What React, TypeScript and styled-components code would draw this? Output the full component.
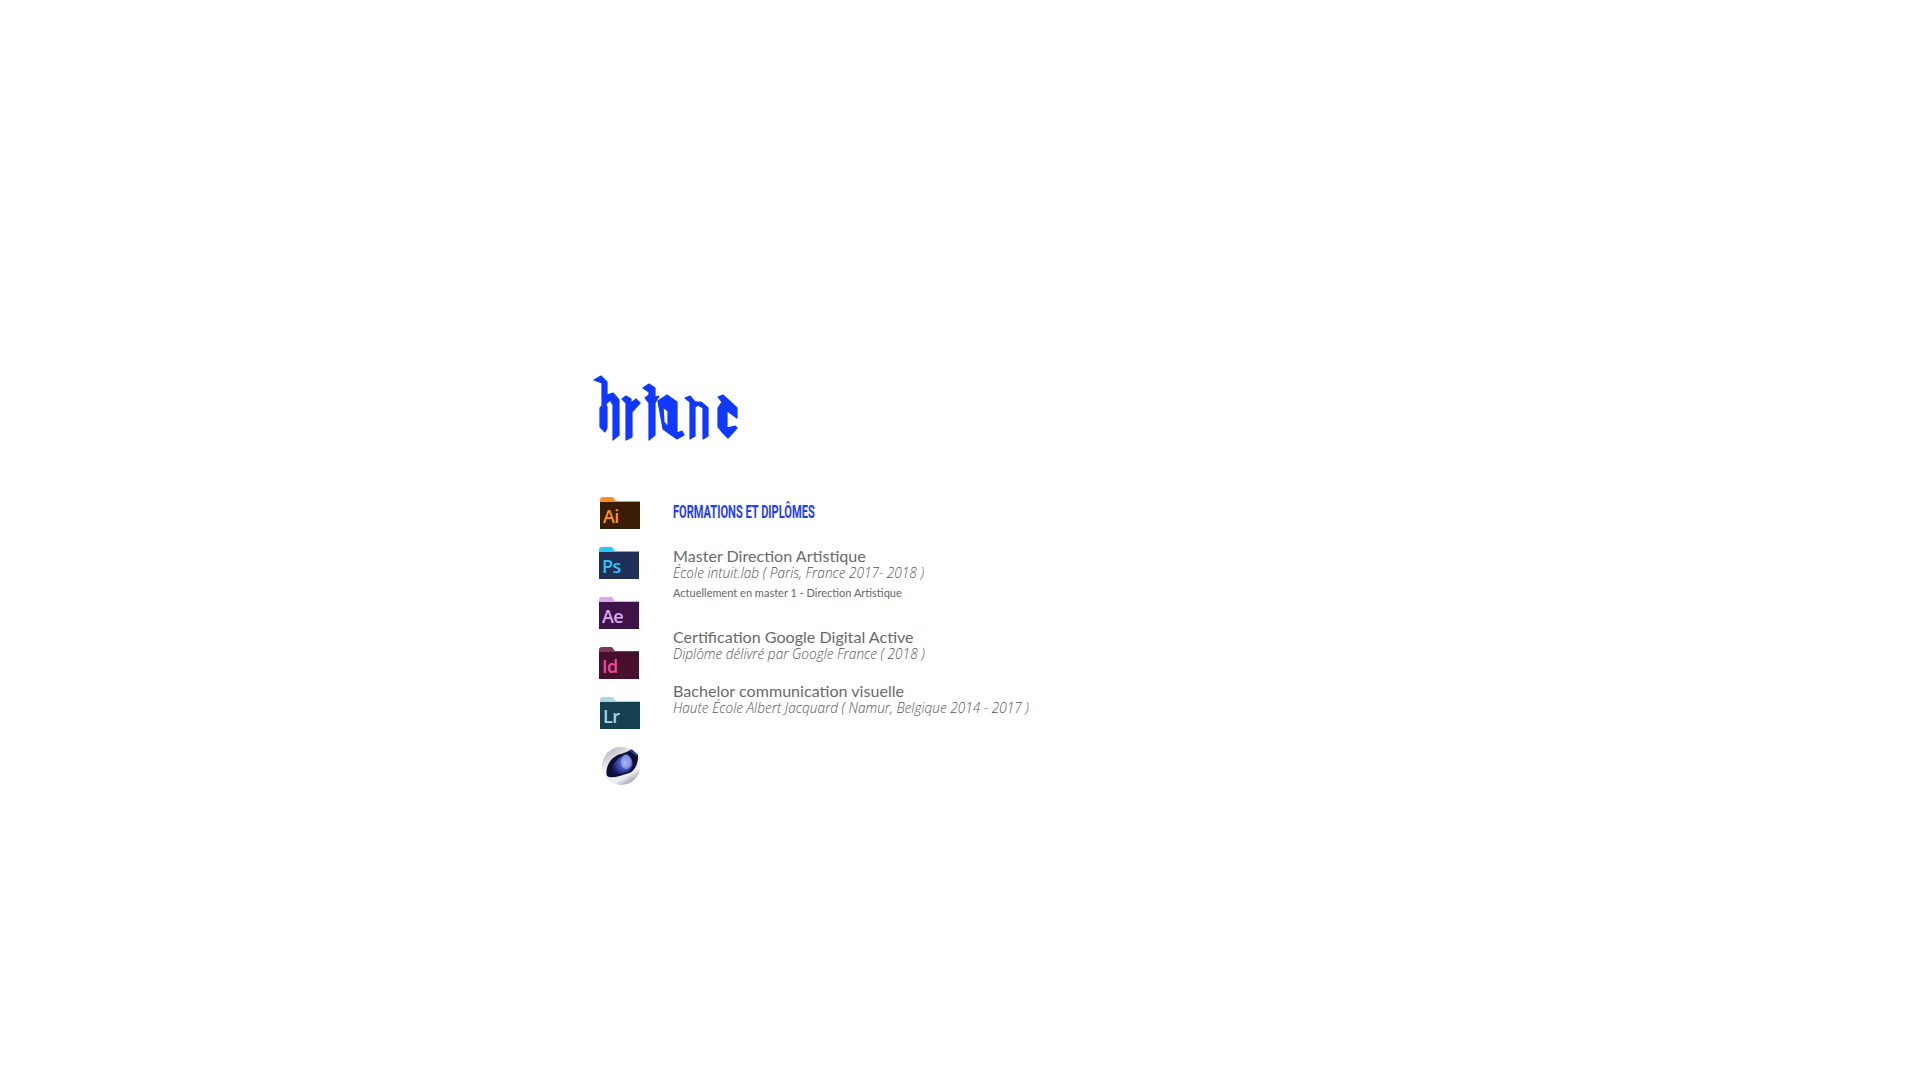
import React from "react";
import styled, {createGlobalStyle} from "styled-components";

const GlobalStyle = createGlobalStyle`
  html, body {
    margin: 0;
    background: #fff;
  }
`;

interface IFolder {
    label: string
    tab: string
    body: string
    text: string
    shift?: number
}

const folders: IFolder[] = [
    {label: "Ai", tab: "#f7931e", body: "#3a1c07", text: "#f7931e", shift: 1},
    {label: "Ps", tab: "#2fc6f5", body: "#1f2f57", text: "#31c5f4"},
    {label: "Ae", tab: "#d9a9ee", body: "#3f1349", text: "#d9a9ee"},
    {label: "Id", tab: "#7a3a52", body: "#46102c", text: "#f04a9d"},
    {label: "Lr", tab: "#a9d6e5", body: "#15404f", text: "#a9d6e5", shift: 1}
];

const FolderIcon = ({label, tab, body, text, shift}: IFolder) => (
    <FolderSvg viewBox="0 0 40 32" $shift={shift || 0}>
        <path d="M0 6 V3 Q0 0 3 0 H12 Q14 0 15 3 L16 4 H40 V6 Z" fill={tab}/>
        <rect x="0" y="5" width="40" height="27" fill={body}/>
        <rect x="15" y="4" width="25" height="1" fill={tab} opacity="0.8"/>
        <FolderLabel x="3" y="26" fill={text}>{label}</FolderLabel>
    </FolderSvg>
);

const CinemaIcon = () => (
    <CinemaSvg viewBox="0 0 40 40">
        <defs>
            <linearGradient id="ball" x1="0.1" y1="0" x2="0.7" y2="1">
                <stop offset="0" stopColor="#a8aab2"/>
                <stop offset="0.45" stopColor="#f6f6f8"/>
                <stop offset="0.8" stopColor="#eeeef2"/>
                <stop offset="1" stopColor="#9a9ca6"/>
            </linearGradient>
            <radialGradient id="bowl" cx="0.62" cy="0.45" r="0.65">
                <stop offset="0" stopColor="#a6b2ee"/>
                <stop offset="0.45" stopColor="#4453bd"/>
                <stop offset="1" stopColor="#12165a"/>
            </radialGradient>
        </defs>
        <circle cx="20" cy="20" r="20" fill="url(#ball)"/>
        <path d="M5 30 C3 20 10 9 21 7 C26 6 29 3 32 3 L38 9 C38 17 35 26 27 28 C19 31 8 34 5 30 Z" fill="#0d1033"/>
        <path d="M11 28 C9 19 16 10 27 7 C31 11 33 15 32 20 C30 25 25 28 20 28 C16 29 12 29 11 28 Z" fill="url(#bowl)"/>
        <path d="M24 8 C19 12 19 20 24 23 C29 24 32 18 31 14 C30 11 27 8 24 8 Z" fill="#aebaf2" opacity="0.6"/>
        <path d="M30 2 L38 8 L36.5 10 L29 4 Z" fill="#2b3fa6"/>
    </CinemaSvg>
);

// the "briane" logo, blackletter shapes drawn by hand
const Logo = () => (
    <LogoSvg viewBox="0 0 146 66">
        <LogoLetters>
            <path d="M1 5 L8 1 L14 7 L14 20 L20 18 L26 25 L26 60 L20 65 L20 30 L17 25 L9 33 L9 8 Z"/>
            <path d="M7 33 L12 28 L14 32 L14 53 L12 57 L7 52 Z"/>
            <path d="M29 24 L33 21 L38 24 L38 28 L43 24 L47 28 L39 37 L39 62 L33 65 L33 28 Z"/>
            <path d="M50 13 L56 9 L62 13 L62 22 L66 21 L62 28 L62 60 L56 65 L56 28 L52 23 L56 20 L56 17 Z"/>
            <path fillRule="evenodd" d="M65 26 L74 20 L84 27 L84 58 L89 56 L91 60 L84 64 L70 54 L67 37 Z M70 32 L75 36 L75 52 L71 47 Z"/>
            <path d="M92 23 L97 21 L102 27 L108 27 L115 33 L115 61 L110 64 L110 33 L105 30 L102 32 L102 61 L97 64 L97 27 Z"/>
            <path d="M125 22 L130 20 L144 33 L144 43 L137 38 L134 35 L134 53 L142 51 L144 53 L135 63 L129 57 L125 52 L125 33 L129 27 Z"/>
        </LogoLetters>
    </LogoSvg>
);

const App = () => (
    <Page>
        <GlobalStyle/>
        <Logo/>
        <Columns>
            <IconColumn>
                {folders.map(folder => <FolderIcon key={folder.label} {...folder}/>)}
                <CinemaIcon/>
            </IconColumn>
            <TextColumn>
                <Heading>Formations et diplômes</Heading>
                <Entry>
                    <Title>Master Direction Artistique</Title>
                    <School>École intuit.lab ( Paris, France 2017- 2018 )</School>
                    <Note>Actuellement en master 1 - Direction Artistique</Note>
                </Entry>
                <Entry>
                    <Title>Certification Google Digital Active</Title>
                    <School>Diplôme délivré par Google France ( 2018 )</School>
                </Entry>
                <Entry>
                    <Title>Bachelor communication visuelle</Title>
                    <School>Haute École Albert Jacquard ( Namur, Belgique 2014 - 2017 )</School>
                </Entry>
            </TextColumn>
        </Columns>
    </Page>
);

const Page = styled.div`
  min-height: 1080px;
  box-sizing: border-box;
  padding: 375px 0 0 593px;
  font-family: Lato, "Open Sans", sans-serif;
  color: #555;
`;

const LogoSvg = styled.svg`
  display: block;
  width: 146px;
  height: 66px;
`;

const LogoLetters = styled.g`
  fill: #1038ff;
  stroke: #1038ff;
  stroke-width: 1.2;
  stroke-linejoin: round;
`;

const Columns = styled.div`
  display: flex;
  margin-top: 56px;
`;

const IconColumn = styled.div`
  display: flex;
  flex-direction: column;
  align-items: flex-start;
  gap: 18px;
  width: 80px;
  padding-left: 6px;
  box-sizing: border-box;
`;

const FolderSvg = styled.svg<{$shift: number}>`
  display: block;
  width: 40px;
  height: 32px;
  margin-left: ${p => p.$shift}px;
`;

const FolderLabel = styled.text`
  font-family: "Open Sans", sans-serif;
  font-size: 18px;
  font-weight: 600;
  letter-spacing: -0.6px;
`;

const CinemaSvg = styled.svg`
  display: block;
  width: 38px;
  height: 38px;
  margin-left: 3px;
`;

const TextColumn = styled.div`
  display: flex;
  flex-direction: column;
  padding-top: 4px;
`;

const Heading = styled.h2`
  margin: 0 0 23px;
  width: max-content;
  font-family: Roboto, sans-serif;
  font-size: 18px;
  line-height: 22px;
  font-weight: 700;
  text-transform: uppercase;
  color: #1f3dff;
  transform: scaleX(0.615);
  transform-origin: left center;
`;

const Entry = styled.div`
  margin-bottom: 19px;
`;

const Title = styled.div`
  font-size: 16.1px;
  font-weight: 400;
  line-height: 19px;
  color: #6a6a6a;
`;

const School = styled.div`
  font-family: "Open Sans", sans-serif;
  font-size: 13.65px;
  font-weight: 300;
  line-height: 16px;
  font-style: italic;
`;

const Note = styled.div`
  margin: 4px 0 7px;
  font-size: 11px;
  line-height: 16px;
  color: #666;
`;

export default App;
